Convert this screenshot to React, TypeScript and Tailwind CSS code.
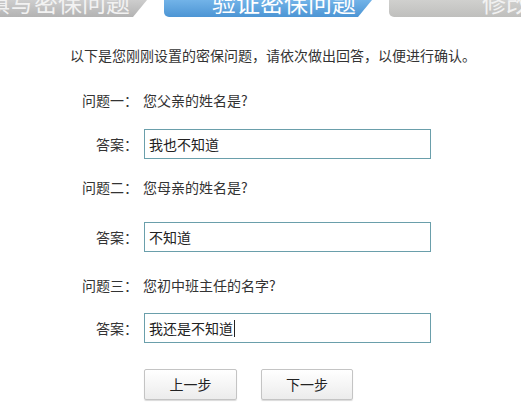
import React from 'react';

interface QA {
  label: string;
  question: string;
  answer: string;
  caret?: boolean;
}

const items: QA[] = [
  { label: '问题一：', question: '您父亲的姓名是?', answer: '我也不知道' },
  { label: '问题二：', question: '您母亲的姓名是?', answer: '不知道' },
  { label: '问题三：', question: '您初中班主任的名字?', answer: '我还是不知道', caret: true },
];

// spacing between rows differs a little in the original page
const qMargins = ['mt-[25px]', 'mt-[18px]', 'mt-[23px]'];
const aMargins = ['mt-[19px]', 'mt-[25px]', 'mt-[18px]'];

const App: React.FC = () => {
  return (
    <div className="w-[521px] h-[417px] overflow-hidden bg-white text-[#333] font-['Noto_Sans_CJK_SC','Noto_Sans',sans-serif]">
      {/* step tabs, only the bottom part is visible */}
      <div className="flex h-[17px] overflow-hidden">
        <div className="ml-[-20px] w-[167px] shrink-0 flex items-end justify-end pr-[17px] bg-gradient-to-b from-[#cdcdcd] to-[#b3b3b3] [clip-path:polygon(0_0,100%_0,calc(100%-14px)_100%,0_100%)]">
          <span className="text-[24px] leading-[24px] mb-[3px] text-[#f2f2f2] whitespace-nowrap">填写密保问题</span>
        </div>
        <div className="ml-[17px] w-[208px] shrink-0 flex items-end pl-[48px] rounded-bl-[5px] bg-gradient-to-b from-[#72b3e8] to-[#4c95d4] [clip-path:polygon(0_0,100%_0,calc(100%-14px)_100%,0_100%)]">
          <span className="text-[24px] leading-[24px] mb-[3px] text-white whitespace-nowrap">验证密保问题</span>
        </div>
        <div className="ml-[17px] w-[200px] shrink-0 flex items-end pl-[93px] rounded-bl-[5px] bg-gradient-to-b from-[#d0d0ce] to-[#bfbfbd]">
          <span className="text-[24px] leading-[24px] mb-[3px] text-[#f2f2f2] whitespace-nowrap">修改密保问题</span>
        </div>
      </div>

      <p className="mt-[28px] pl-[70px] text-[14px] leading-[20px] whitespace-nowrap">
        以下是您刚刚设置的密保问题，请依次做出回答，以便进行确认。
      </p>

      <div className="flex flex-col">
        {items.map((it, i) => (
          <React.Fragment key={it.label}>
            <div className={`${qMargins[i]} flex items-center h-[20px] text-[14px]`}>
              <span className="w-[140px] pr-[2px] text-right whitespace-nowrap">{it.label}</span>
              <span className="ml-[3px] whitespace-nowrap">{it.question}</span>
            </div>
            <div className={`${aMargins[i]} flex items-center h-[30px] text-[14px]`}>
              <span className="w-[140px] pr-[2px] text-right">答案：</span>
              <div className="ml-[4px] w-[287px] h-[30px] border border-[#6a9fab] flex items-center pl-[4px] text-[#222]">
                {it.answer}
                {it.caret && <span className="ml-[1px] w-px h-[17px] bg-[#222]" />}
              </div>
            </div>
          </React.Fragment>
        ))}
      </div>

      <div className="mt-[26px] ml-[144px] flex gap-[24px]">
        <button className="w-[93px] h-[31px] rounded-[2px] border border-[#c4c4c4] bg-gradient-to-b from-white to-[#ececec] shadow-[0_1px_1px_rgba(0,0,0,0.15)] text-[14px] text-[#222]">
          上一步
        </button>
        <button className="w-[92px] h-[31px] rounded-[2px] border border-[#c4c4c4] bg-gradient-to-b from-white to-[#ececec] shadow-[0_1px_1px_rgba(0,0,0,0.15)] text-[14px] text-[#222]">
          下一步
        </button>
      </div>
    </div>
  );
};

export default App;
